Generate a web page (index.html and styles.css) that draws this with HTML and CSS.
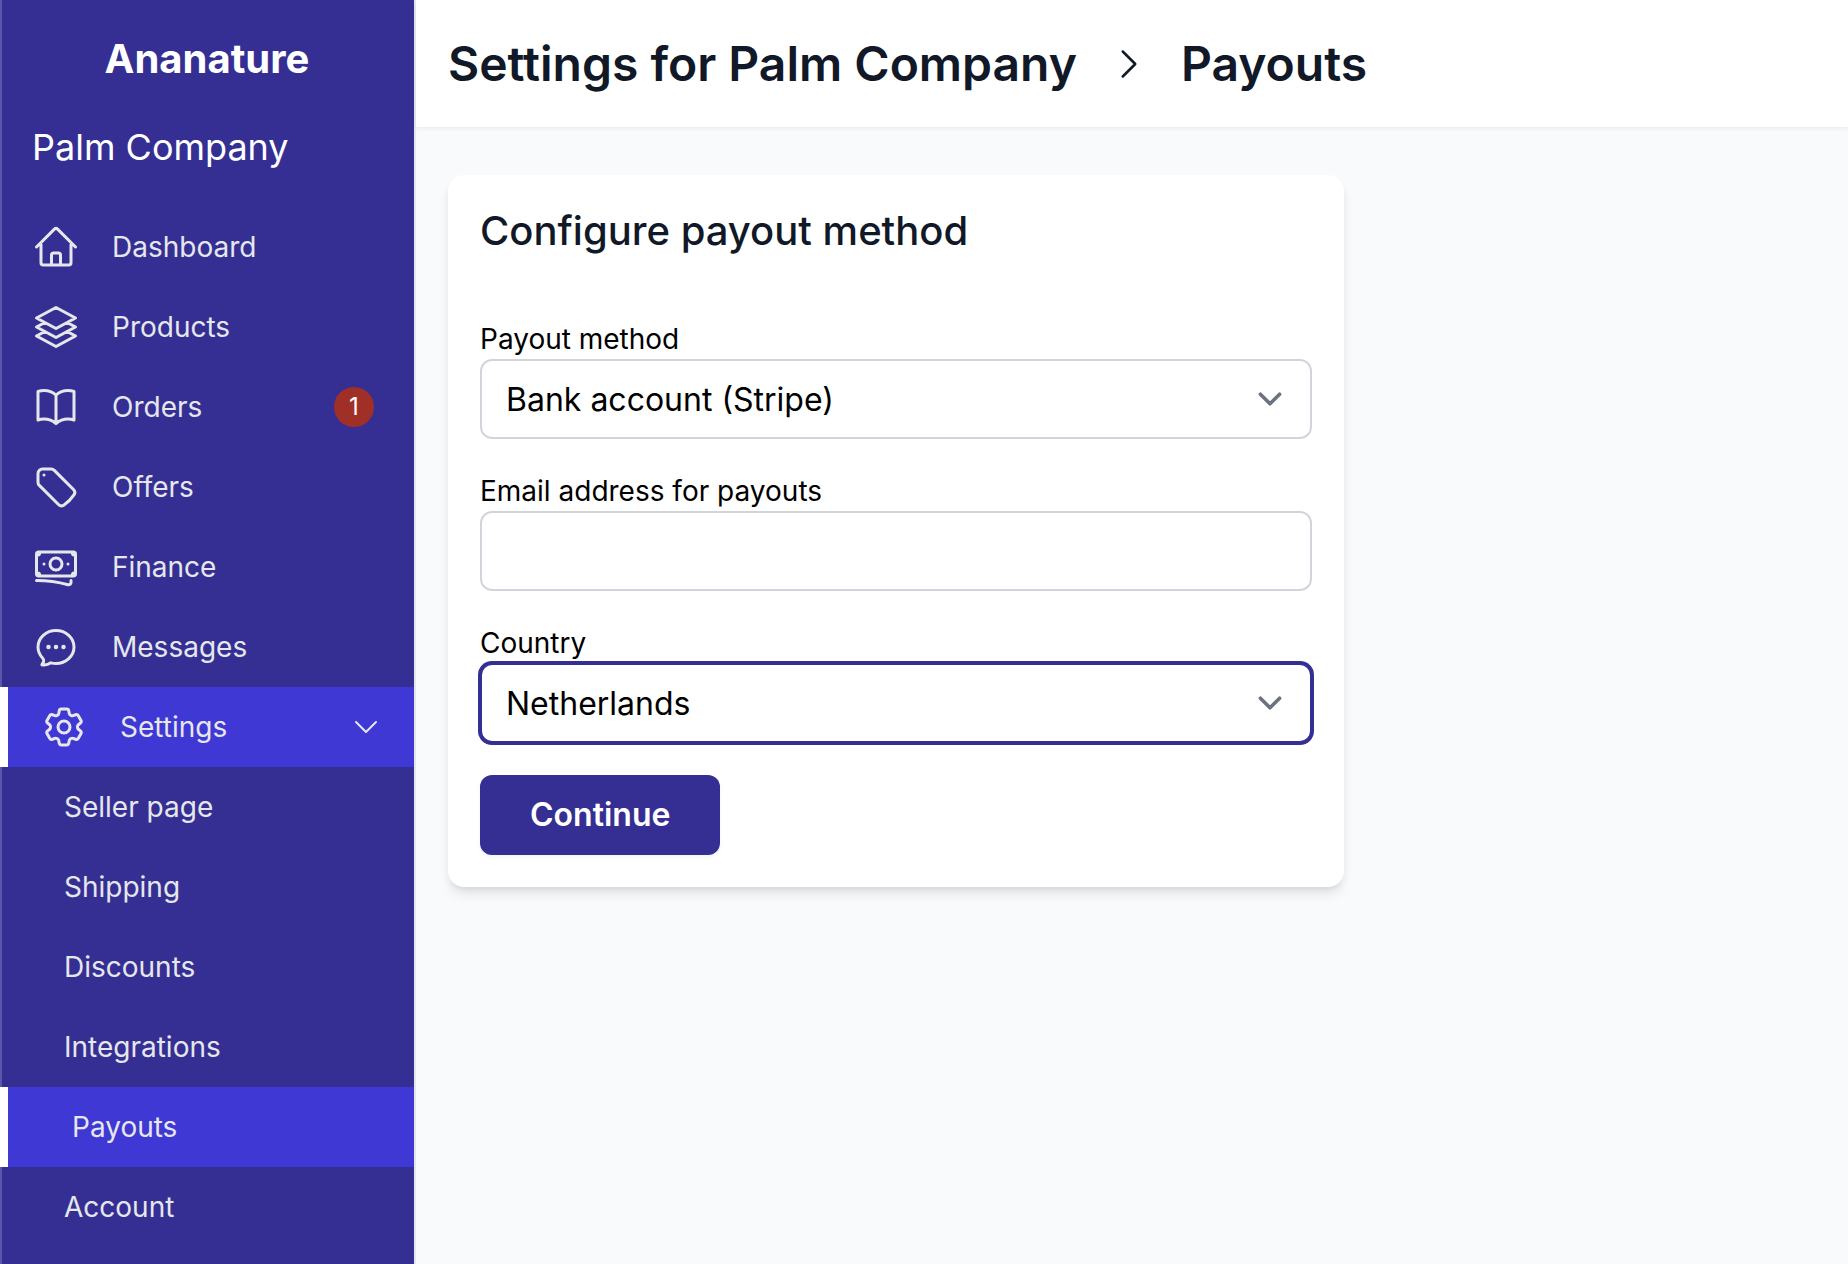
FILE: index.html
```html
<!DOCTYPE html>
<html lang="en">
<head>
    <meta charset="UTF-8">
    <meta name="viewport" content="width=device-width, initial-scale=1.0">
    <title>Payouts - Ananature</title>
    <link rel="stylesheet" href="styles.css">
</head>
<body>
    <aside class="sidebar">
        <div class="brand">Ananature</div>
        <div class="company">Palm Company</div>

        <nav class="nav">
            <a class="nav-item" href="#dashboard">
                <svg class="icon" viewBox="0 0 24 24" aria-hidden="true">
                    <path d="M2.25 12l8.954-8.955c.44-.439 1.152-.439 1.591 0L21.75 12M4.5 9.75v10.125c0 .621.504 1.125 1.125 1.125H9.75v-4.875c0-.621.504-1.125 1.125-1.125h2.25c.621 0 1.125.504 1.125 1.125V21h4.125c.621 0 1.125-.504 1.125-1.125V9.75M8.25 21h8.25"/>
                </svg>
                <span>Dashboard</span>
            </a>
            <a class="nav-item" href="#products">
                <svg class="icon" viewBox="0 0 24 24" aria-hidden="true">
                    <path d="M6.429 9.75L2.25 12l4.179 2.25m0-4.5l5.571 3 5.571-3m-11.142 0L2.25 7.5 12 2.25l9.75 5.25-4.179 2.25m0 0L21.75 12l-4.179 2.25m0 0l4.179 2.25L12 21.75 2.25 16.5l4.179-2.25m11.142 0l-5.571 3-5.571-3"/>
                </svg>
                <span>Products</span>
            </a>
            <a class="nav-item" href="#orders">
                <svg class="icon" viewBox="0 0 24 24" aria-hidden="true">
                    <path d="M12 6.042A8.967 8.967 0 006 3.75c-1.052 0-2.062.18-3 .512v14.25A8.987 8.987 0 016 18c2.305 0 4.408.867 6 2.292m0-14.25a8.966 8.966 0 016-2.292c1.052 0 2.062.18 3 .512v14.25A8.987 8.987 0 0018 18a8.967 8.967 0 00-6 2.292m0-14.25v14.25"/>
                </svg>
                <span>Orders</span>
                <span class="badge">1</span>
            </a>
            <a class="nav-item" href="#offers">
                <svg class="icon" viewBox="0 0 24 24" aria-hidden="true">
                    <path d="M9.568 3H5.25A2.25 2.25 0 003 5.25v4.318c0 .597.237 1.17.659 1.591l9.581 9.581c.699.699 1.78.872 2.607.33a18.095 18.095 0 005.223-5.223c.542-.827.369-1.908-.33-2.607L11.16 3.66A2.25 2.25 0 009.568 3z"/>
                    <path d="M6 6h.008v.008H6V6z"/>
                </svg>
                <span>Offers</span>
            </a>
            <a class="nav-item" href="#finance">
                <svg class="icon" viewBox="0 0 24 24" aria-hidden="true">
                    <path d="M2.25 18.75a60.07 60.07 0 0115.797 2.101c.727.198 1.453-.342 1.453-1.096V18.75M3.75 4.5v.75A.75.75 0 013 6h-.75m0 0v-.375c0-.621.504-1.125 1.125-1.125H20.25M2.25 6v9m18-10.5v.75c0 .414.336.75.75.75h.75m-1.5-1.5h.375c.621 0 1.125.504 1.125 1.125v9.75c0 .621-.504 1.125-1.125 1.125h-.375m1.5-1.5H21a.75.75 0 00-.75.75v.75m0 0H3.75m0 0h-.375a1.125 1.125 0 01-1.125-1.125V15m1.5 1.5v-.75A.75.75 0 003 15h-.75M15 10.5a3 3 0 11-6 0 3 3 0 016 0zm3 0h.008v.008H18V10.5zm-12 0h.008v.008H6V10.5z"/>
                </svg>
                <span>Finance</span>
            </a>
            <a class="nav-item" href="#messages">
                <svg class="icon" viewBox="0 0 24 24" aria-hidden="true">
                    <path d="M8.625 12a.375.375 0 11-.75 0 .375.375 0 01.75 0zm0 0H8.25m4.125 0a.375.375 0 11-.75 0 .375.375 0 01.75 0zm0 0H12m4.125 0a.375.375 0 11-.75 0 .375.375 0 01.75 0zm0 0h-.375"/>
                    <path d="M12 20.25c4.97 0 9-3.694 9-8.25s-4.03-8.25-9-8.25S3 7.444 3 12c0 2.104.859 4.023 2.273 5.48.432.447.74 1.04.586 1.641a4.483 4.483 0 01-.923 1.785A5.969 5.969 0 006 21c1.282 0 2.47-.402 3.445-1.087.81.22 1.668.337 2.555.337z"/>
                </svg>
                <span>Messages</span>
            </a>
            <button class="nav-item active" type="button" aria-expanded="true" aria-controls="settings_menu">
                <svg class="icon" viewBox="0 0 24 24" aria-hidden="true">
                    <path d="M9.594 3.94c.09-.542.56-.94 1.11-.94h2.593c.55 0 1.02.398 1.11.94l.213 1.281c.063.374.313.686.645.87.074.04.147.083.22.127.324.196.72.257 1.075.124l1.217-.456a1.125 1.125 0 011.37.49l1.296 2.247a1.125 1.125 0 01-.26 1.431l-1.003.827c-.293.24-.438.613-.431.992a6.759 6.759 0 010 .255c-.007.378.138.75.43.99l1.005.828c.424.35.534.954.26 1.43l-1.298 2.247a1.125 1.125 0 01-1.369.491l-1.217-.456c-.355-.133-.75-.072-1.076.124a6.57 6.57 0 01-.22.128c-.331.183-.581.495-.644.869l-.213 1.28c-.09.543-.56.941-1.11.941h-2.594c-.55 0-1.02-.398-1.11-.94l-.213-1.281c-.062-.374-.312-.686-.644-.87a6.52 6.52 0 01-.22-.127c-.325-.196-.72-.257-1.076-.124l-1.217.456a1.125 1.125 0 01-1.369-.49l-1.297-2.247a1.125 1.125 0 01.26-1.431l1.004-.827c.292-.24.437-.613.43-.992a6.932 6.932 0 010-.255c.007-.378-.138-.75-.43-.99l-1.004-.828a1.125 1.125 0 01-.26-1.43l1.297-2.247a1.125 1.125 0 011.37-.491l1.216.456c.356.133.751.072 1.076-.124.072-.044.146-.087.22-.128.332-.183.582-.495.644-.869l.214-1.281z"/>
                    <path d="M15 12a3 3 0 11-6 0 3 3 0 016 0z"/>
                </svg>
                <span>Settings</span>
                <svg class="chevron" viewBox="0 0 24 24" aria-hidden="true">
                    <path d="M19.5 8.25l-7.5 7.5-7.5-7.5"/>
                </svg>
            </button>

            <div class="submenu" id="settings_menu">
                <a class="nav-item" href="#seller-page">Seller page</a>
                <a class="nav-item" href="#shipping">Shipping</a>
                <a class="nav-item" href="#discounts">Discounts</a>
                <a class="nav-item" href="#integrations">Integrations</a>
                <a class="nav-item active" href="#payouts" aria-current="page">Payouts</a>
                <a class="nav-item" href="#account">Account</a>
            </div>
        </nav>
    </aside>

    <div class="page">
        <header class="page-header">
            <h1>Settings for Palm Company</h1>
            <svg class="separator" viewBox="0 0 24 24" aria-hidden="true">
                <path d="M8.25 4.5l7.5 7.5-7.5 7.5"/>
            </svg>
            <h1>Payouts</h1>
        </header>

        <main class="content">
            <form class="card">
                <h2>Configure payout method</h2>

                <div class="field">
                    <label for="payout_method">Payout method</label>
                    <select class="control" id="payout_method">
                        <option>Bank account (Stripe)</option>
                    </select>
                </div>

                <div class="field">
                    <label for="email">Email address for payouts</label>
                    <input class="control" type="email" id="email">
                </div>

                <div class="field">
                    <label for="country">Country</label>
                    <select class="control" id="country" autofocus>
                        <option>Netherlands</option>
                    </select>
                </div>

                <button class="submit" type="submit">Continue</button>
            </form>
        </main>
    </div>
</body>
</html>
```
FILE: styles.css
```css
* {
    box-sizing: border-box;
}
body {
    display: flex;
    min-height: 100vh;
    margin: 0;
    background: #f9fafb;
    color: #000;
    font-family: Inter, "Liberation Sans", sans-serif;
    font-size: 28px;
    line-height: 40px;
}
h1, h2 {
    margin: 0;
    color: #111827;
}
svg {
    flex: none;
    fill: none;
    stroke: currentColor;
    stroke-width: 1.5;
    stroke-linecap: round;
    stroke-linejoin: round;
}
button, input, select {
    font-family: inherit;
}

/* sidebar */
.sidebar {
    flex: none;
    width: 416px;
    padding-top: 31px;
    border-right: 2px solid #e5e7eb;
    background: #352f94;
    box-shadow: inset 2px 0 #5b56a8;
    color: #fff;
}
.brand {
    font-size: 40px;
    font-weight: 700;
    line-height: 56px;
    text-align: center;
}
.company {
    padding: 32px;
    font-size: 36px;
    line-height: 56px;
}
.nav-item {
    display: flex;
    align-items: center;
    gap: 32px;
    width: 100%;
    padding: 20px 32px;
    border: 0;
    background: none;
    color: #e5e7eb;
    font-size: 28px;
    line-height: 40px;
    text-align: left;
    text-decoration: none;
}
.nav-item.active {
    border-left: 8px solid #fff;
    background: #4038d4;
}
.icon {
    width: 48px;
    height: 48px;
    margin: -4px 0;
}
.badge {
    width: 40px;
    margin: 0 8px 0 auto;
    border-radius: 50%;
    background: #9f2f27;
    color: #fff;
    font-size: 24px;
    text-align: center;
}
.chevron {
    width: 32px;
    height: 32px;
    margin-left: auto;
}
.submenu .nav-item {
    padding-left: 64px;
}

/* page */
.page {
    flex: 1;
    min-width: 0;
}
.page-header {
    display: flex;
    align-items: center;
    gap: 32px;
    padding: 32px;
    background: #fff;
    box-shadow: 0 2px 4px rgba(0, 0, 0, 0.06);
}
.page-header h1 {
    font-size: 48px;
    font-weight: 600;
    line-height: 63px;
}
.separator {
    width: 40px;
    height: 40px;
    color: #111827;
}
.content {
    padding: 48px 32px;
}

/* payout form */
.card {
    display: flex;
    flex-direction: column;
    align-items: flex-start;
    gap: 32px;
    max-width: 896px;
    padding: 32px;
    border-radius: 16px;
    background: #fff;
    box-shadow: 0 8px 12px -2px rgba(0, 0, 0, 0.1), 0 4px 8px -4px rgba(0, 0, 0, 0.1);
}
.card h2 {
    padding-bottom: 32px;
    font-size: 40px;
    font-weight: 500;
    line-height: 48px;
}
.field {
    width: 100%;
}
.field label {
    display: block;
}
.control {
    display: block;
    width: 100%;
    height: 80px;
    padding: 0 24px;
    border: 2px solid #d1d5db;
    border-radius: 12px;
    background: #fff;
    color: #000;
    font-size: 32px;
    appearance: none;
}
select.control {
    padding-right: 80px;
    background-image: url("data:image/svg+xml,%3csvg xmlns='http://www.w3.org/2000/svg' fill='none' viewBox='0 0 20 20'%3e%3cpath stroke='%236b7280' stroke-linecap='round' stroke-linejoin='round' stroke-width='1.5' d='M6 8l4 4 4-4'/%3e%3c/svg%3e");
    background-position: right 16px center;
    background-repeat: no-repeat;
    background-size: 48px 48px;
}
.control:focus {
    outline: none;
    border-color: #352f94;
    box-shadow: 0 0 0 2px #352f94;
}
.submit {
    padding: 16px 50px;
    border: 0;
    border-radius: 12px;
    background: #352f94;
    box-shadow: 0 2px 4px rgba(0, 0, 0, 0.05);
    color: #fff;
    font-size: 32px;
    font-weight: 600;
    line-height: 48px;
}
```
